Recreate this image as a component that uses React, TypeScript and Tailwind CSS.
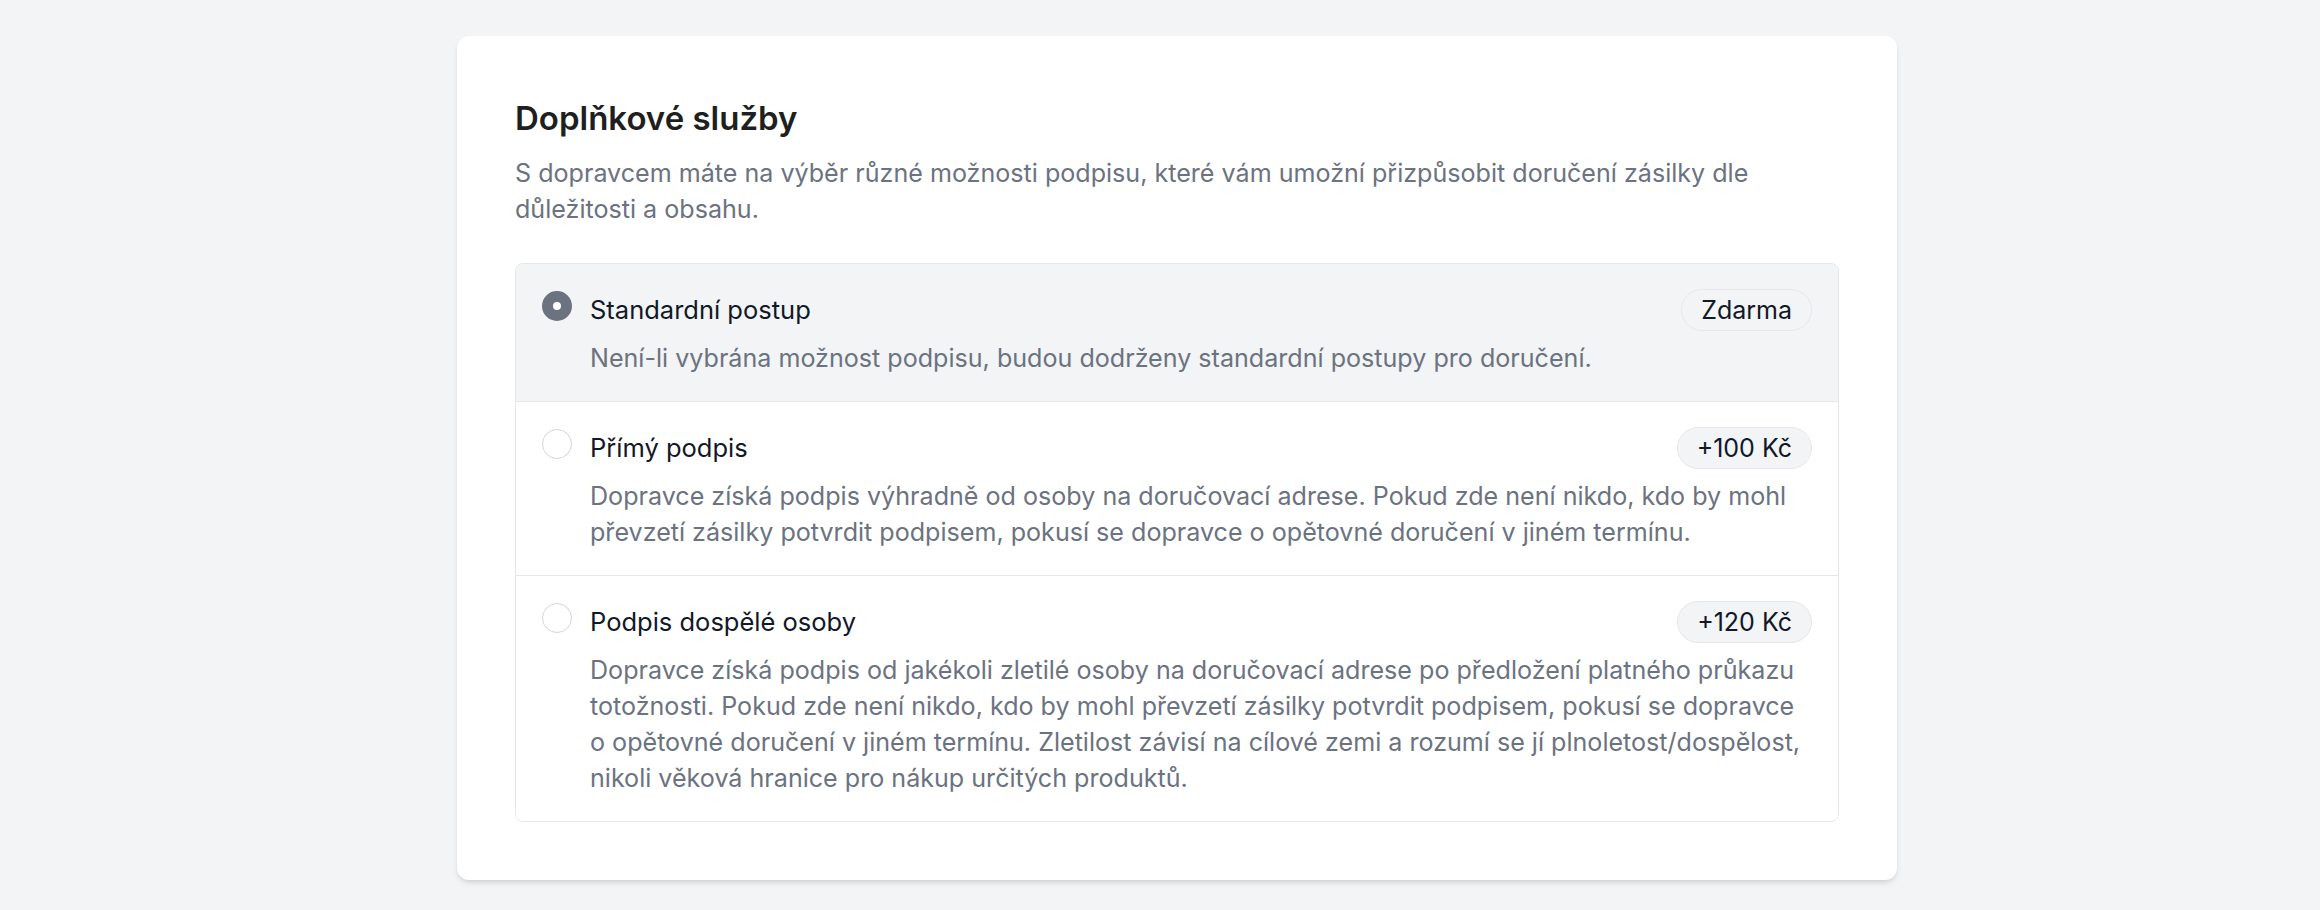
import React, { useState } from 'react';

type Option = {
  id: string;
  title: string;
  price: string;
  description: string;
};

const options: Option[] = [
  {
    id: 'standard',
    title: 'Standardní postup',
    price: 'Zdarma',
    description: 'Není-li vybrána možnost podpisu, budou dodrženy standardní postupy pro doručení.',
  },
  {
    id: 'direct',
    title: 'Přímý podpis',
    price: '+100 Kč',
    description:
      'Dopravce získá podpis výhradně od osoby na doručovací adrese. Pokud zde není nikdo, kdo by mohl převzetí zásilky potvrdit podpisem, pokusí se dopravce o opětovné doručení v jiném termínu.',
  },
  {
    id: 'adult',
    title: 'Podpis dospělé osoby',
    price: '+120 Kč',
    description:
      'Dopravce získá podpis od jakékoli zletilé osoby na doručovací adrese po předložení platného průkazu totožnosti. Pokud zde není nikdo, kdo by mohl převzetí zásilky potvrdit podpisem, pokusí se dopravce o opětovné doručení v jiném termínu. Zletilost závisí na cílové zemi a rozumí se jí plnoletost/dospělost, nikoli věková hranice pro nákup určitých produktů.',
  },
];

export default function App() {
  const [selected, setSelected] = useState('standard');

  return (
    <div
      className="min-h-screen bg-[#f3f4f6] pt-[36px] pb-[31px]"
      style={{ fontFamily: 'Inter, "Noto Sans", sans-serif' }}
    >
      <div className="ml-[457px] w-[1440px] rounded-xl bg-white p-[58px] shadow-md">
        {/* Header */}
        <h2 className="text-[33px] leading-[48px] font-semibold text-[#1f1f1f]">Doplňkové služby</h2>
        <p className="mt-[13px] text-[25.1px] leading-[36px] text-[#6b7280]">
          S dopravcem máte na výběr různé možnosti podpisu, které vám umožní přizpůsobit doručení zásilky dle
          důležitosti a obsahu.
        </p>

        {/* Options */}
        <div className="mt-[36px] overflow-hidden rounded-lg border border-[#e5e7eb] divide-y divide-[#e5e7eb]">
          {options.map((opt) => {
            const active = selected === opt.id;
            return (
              <label
                key={opt.id}
                onClick={() => setSelected(opt.id)}
                className={`flex cursor-pointer items-start gap-[18px] px-[26px] pt-[25px] pb-[25px] ${
                  active ? 'bg-[#f3f4f6]' : 'bg-white'
                }`}
              >
                <span
                  className={`mt-[2px] block h-[30px] w-[30px] shrink-0 rounded-full bg-white ${
                    active ? 'border-[11px] border-[#6b7280]' : 'border border-[#d1d5db]'
                  }`}
                />
                <div className="min-w-0 flex-1">
                  <div className="flex items-center justify-between">
                    <span className="text-[25.5px] leading-[36px] text-[#111827]">{opt.title}</span>
                    <span className="rounded-full border border-[#e5e7eb] bg-[#f3f4f6] px-[19px] py-[2px] text-[25px] leading-[36px] text-[#111827]">
                      {opt.price}
                    </span>
                  </div>
                  <p className="mt-[9px] text-[25.1px] leading-[36px] text-[#6b7280]">{opt.description}</p>
                </div>
              </label>
            );
          })}
        </div>
      </div>
    </div>
  );
}
